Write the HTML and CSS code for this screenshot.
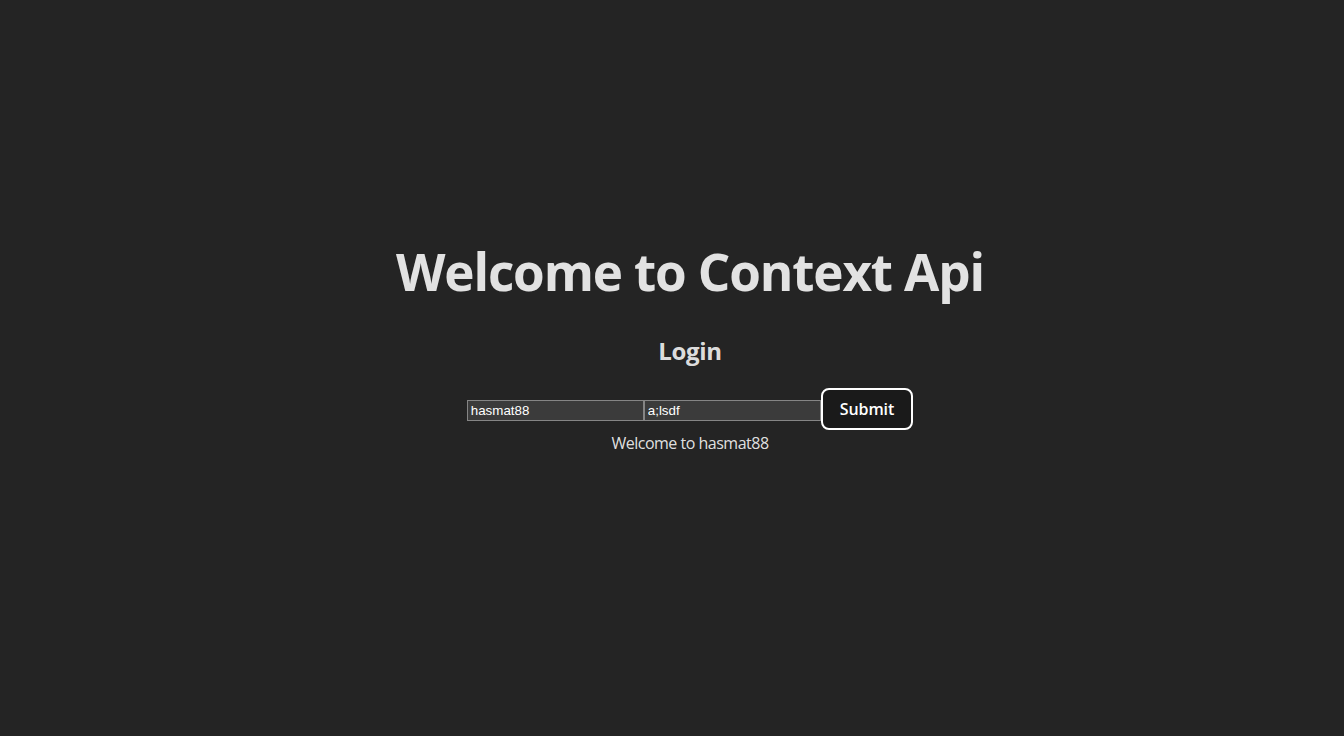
FILE: index.html
```html
<!DOCTYPE html>
<html lang="en">
<head>
<meta charset="UTF-8">
<title>Context Api</title>
<link rel="stylesheet" href="styles.css">
</head>
<body>
<div class="root">
<h1 class="title">Welcome to Context Api</h1>
<div class="login">
<h2 class="login-title">Login</h2>
<div class="form-row"><input class="field" type="text" value="hasmat88"><input class="field" type="text" value="a;lsdf"><button class="submit">Submit</button></div>
</div>
<div class="status">Welcome to hasmat88</div>
</div>
</body>
</html>
```
FILE: styles.css
```css
:root {
  font-family: "Open Sans", "Noto Sans", sans-serif;
  line-height: 1.5;
  font-weight: 400;
  color-scheme: dark;
  color: rgba(255, 255, 255, 0.87);
  background-color: #242424;
}
body {
  margin: 0;
  display: flex;
  place-items: center;
  min-width: 320px;
  min-height: 100vh;
}
.root {
  max-width: 1280px;
  margin: 0 auto;
  padding: 2rem;
  padding-left: 68px;
  text-align: center;
  padding-bottom: 104px;
}
.title {
  font-size: 51.2px;
  line-height: 1.1;
  margin: 34px 0;
  font-weight: 700;
  letter-spacing: -1.15px;
}
.login-title {
  font-size: 24px;
  line-height: 36px;
  margin: 0 0 20px;
  font-weight: 700;
  letter-spacing: -0.3px;
}
.form-row {
  line-height: normal;
}
.field {
  font-family: Arial, "Liberation Sans", sans-serif;
  font-size: 13.333px;
  width: 177px;
  box-sizing: border-box;
  height: 21px;
  padding: 1px 3px;
  border: 1px solid #858585;
  background: #3b3b3b;
  color: #ffffff;
  vertical-align: middle;
}
.submit {
  font-family: inherit;
  font-size: 16px;
  font-weight: 600;
  padding: 0 17px;
  height: 42px;
  border-radius: 8px;
  border: 2px solid #ffffff;
  background: #1a1a1a;
  color: #ffffff;
  vertical-align: middle;
  letter-spacing: -0.1px;
  position: relative;
  top: -1px;
}
.status {
  font-size: 16px;
  line-height: 24px;
  letter-spacing: -0.5px;
}
```
